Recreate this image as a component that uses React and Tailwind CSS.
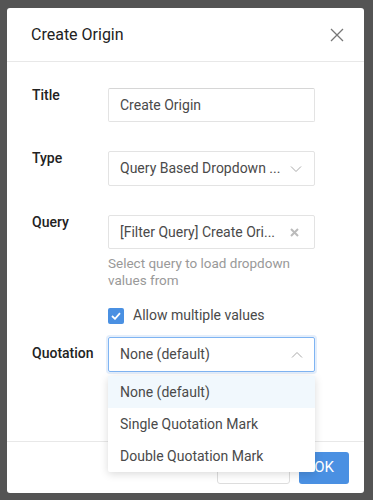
import React from "react";

export default function App() {
  return (
    <div className="w-[373px] h-[500px] bg-[#545454] pt-[8px] pl-[7px]" style={{ fontFamily: "Roboto, 'Liberation Sans', sans-serif" }}>
      <div className="relative w-[357px] h-[485px] bg-white rounded-[3px] flex flex-col">
        <div className="h-[54px] flex items-center justify-between pl-[24px] pr-[20px] border-b border-[#e8e8e8]">
          <span className="text-[16px] text-[#222]">Create Origin</span>
          <svg width="14" height="14" viewBox="0 0 14 14" className="text-[#777]">
            <path d="M1 1L13 13M13 1L1 13" stroke="currentColor" strokeWidth="1.3" />
          </svg>
        </div>
        <div className="flex-1 pl-[25px] pt-[26px]">
          <div className="flex">
            <div className="w-[76px] -mt-[3px] text-[14px] font-medium text-[#222]">Title</div>
            <div className="w-[207px] h-[34px] border border-[#e3e3e3] border-t-[#d6d6d6] rounded-[2px] flex items-center px-[11px] text-[14px] text-[#4a4a4a] whitespace-nowrap">Create Origin</div>
          </div>
          <div className="flex mt-[29px]">
            <div className="w-[76px] -mt-[3px] text-[14px] font-medium text-[#222]">Type</div>
            <div className="w-[207px] h-[35px] border border-[#e3e3e3] rounded-[2px] flex items-center justify-between px-[11px] text-[14px] text-[#4a4a4a] whitespace-nowrap">
              <span>Query Based Dropdown ...</span>
              <svg width="12" height="8" viewBox="0 0 12 8" className="mr-[1px]"><path d="M1 1.5L6 6.5L11 1.5" fill="none" stroke="#aaa" strokeWidth="1" /></svg>
            </div>
          </div>
          <div className="flex mt-[29px]">
            <div className="w-[76px] -mt-[3px] text-[14px] font-medium text-[#222]">Query</div>
            <div>
              <div className="w-[207px] h-[34px] border border-[#e3e3e3] rounded-[2px] flex items-center justify-between px-[11px] text-[14px] text-[#4a4a4a] whitespace-nowrap">
                <span>[Filter Query] Create Ori...</span>
                <svg width="9" height="9" viewBox="0 0 9 9" className="mr-[4px]"><path d="M1 1L8 8M8 1L1 8" stroke="#bbb" strokeWidth="2" /></svg>
              </div>
              <div className="mt-[6px] text-[13.5px] leading-[17px] text-[#999] w-[200px]">Select query to load dropdown values from</div>
              <div className="flex items-center mt-[16px]">
                <div className="w-[16px] h-[16px] bg-[#4a90e2] rounded-[2px] flex items-center justify-center">
                  <svg width="10" height="8" viewBox="0 0 10 8"><path d="M1 4L4 6.8L9 1.2" fill="none" stroke="white" strokeWidth="1.8" /></svg>
                </div>
                <span className="ml-[9px] text-[14px] text-[#4a4a4a]">Allow multiple values</span>
              </div>
            </div>
          </div>
          <div className="flex mt-[11px]">
            <div className="w-[76px] pt-[6px] text-[14px] font-medium text-[#222]">Quotation</div>
            <div className="w-[207px] h-[35px] border border-[#7fb4f2] rounded-[2px] shadow-[0_0_0_2px_rgba(74,144,226,0.15)] flex items-center justify-between px-[11px] text-[14px] text-[#4a4a4a]">
              <span>None (default)</span>
              <svg width="12" height="8" viewBox="0 0 12 8"><path d="M1 6.5L6 1.5L11 6.5" fill="none" stroke="#aaa" strokeWidth="1" /></svg>
            </div>
          </div>
        </div>
        <div className="h-[52px] border-t border-[#e8e8e8] flex items-center justify-end gap-[9px] pr-[15px]">
          <div className="w-[73px] h-[32px] border border-[#ddd] rounded-[3px] flex items-center justify-center text-[14px] text-[#4a4a4a]">Cancel</div>
          <div className="w-[50px] h-[32px] bg-[#4a90e2] rounded-[3px] flex items-center justify-center text-[15px] text-white">OK</div>
        </div>
        <div className="absolute left-[101px] top-[368px] w-[207px] bg-white rounded-[2px] shadow-[0_2px_8px_rgba(0,0,0,0.15)] text-[14px] text-[#4a4a4a]">
          <div className="h-[32px] flex items-center px-[12px] bg-[#f1f8fd]">None (default)</div>
          <div className="h-[32px] flex items-center px-[12px]">Single Quotation Mark</div>
          <div className="h-[32px] flex items-center px-[12px]">Double Quotation Mark</div>
        </div>
      </div>
    </div>
  );
}
